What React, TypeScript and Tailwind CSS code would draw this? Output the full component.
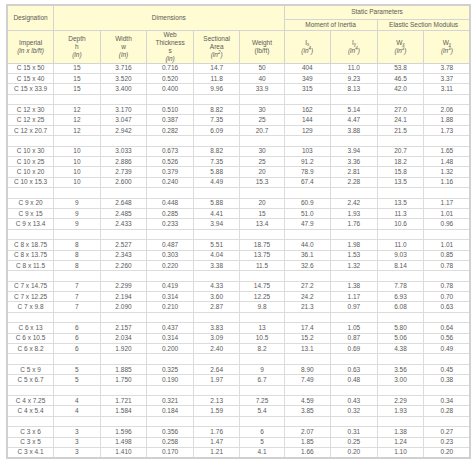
const groups: string[][][] = [
  [
    ["C 15 x 50", "15", "3.716", "0.716", "14.7", "50", "404", "11.0", "53.8", "3.78"],
    ["C 15 x 40", "15", "3.520", "0.520", "11.8", "40", "349", "9.23", "46.5", "3.37"],
    ["C 15 x 33.9", "15", "3.400", "0.400", "9.96", "33.9", "315", "8.13", "42.0", "3.11"],
  ],
  [
    ["C 12 x 30", "12", "3.170", "0.510", "8.82", "30", "162", "5.14", "27.0", "2.06"],
    ["C 12 x 25", "12", "3.047", "0.387", "7.35", "25", "144", "4.47", "24.1", "1.88"],
    ["C 12 x 20.7", "12", "2.942", "0.282", "6.09", "20.7", "129", "3.88", "21.5", "1.73"],
  ],
  [
    ["C 10 x 30", "10", "3.033", "0.673", "8.82", "30", "103", "3.94", "20.7", "1.65"],
    ["C 10 x 25", "10", "2.886", "0.526", "7.35", "25", "91.2", "3.36", "18.2", "1.48"],
    ["C 10 x 20", "10", "2.739", "0.379", "5.88", "20", "78.9", "2.81", "15.8", "1.32"],
    ["C 10 x 15.3", "10", "2.600", "0.240", "4.49", "15.3", "67.4", "2.28", "13.5", "1.16"],
  ],
  [
    ["C 9 x 20", "9", "2.648", "0.448", "5.88", "20", "60.9", "2.42", "13.5", "1.17"],
    ["C 9 x 15", "9", "2.485", "0.285", "4.41", "15", "51.0", "1.93", "11.3", "1.01"],
    ["C 9 x 13.4", "9", "2.433", "0.233", "3.94", "13.4", "47.9", "1.76", "10.6", "0.96"],
  ],
  [
    ["C 8 x 18.75", "8", "2.527", "0.487", "5.51", "18.75", "44.0", "1.98", "11.0", "1.01"],
    ["C 8 x 13.75", "8", "2.343", "0.303", "4.04", "13.75", "36.1", "1.53", "9.03", "0.85"],
    ["C 8 x 11.5", "8", "2.260", "0.220", "3.38", "11.5", "32.6", "1.32", "8.14", "0.78"],
  ],
  [
    ["C 7 x 14.75", "7", "2.299", "0.419", "4.33", "14.75", "27.2", "1.38", "7.78", "0.78"],
    ["C 7 x 12.25", "7", "2.194", "0.314", "3.60", "12.25", "24.2", "1.17", "6.93", "0.70"],
    ["C 7 x 9.8", "7", "2.090", "0.210", "2.87", "9.8", "21.3", "0.97", "6.08", "0.63"],
  ],
  [
    ["C 6 x 13", "6", "2.157", "0.437", "3.83", "13", "17.4", "1.05", "5.80", "0.64"],
    ["C 6 x 10.5", "6", "2.034", "0.314", "3.09", "10.5", "15.2", "0.87", "5.06", "0.56"],
    ["C 6 x 8.2", "6", "1.920", "0.200", "2.40", "8.2", "13.1", "0.69", "4.38", "0.49"],
  ],
  [
    ["C 5 x 9", "5", "1.885", "0.325", "2.64", "9", "8.90", "0.63", "3.56", "0.45"],
    ["C 5 x 6.7", "5", "1.750", "0.190", "1.97", "6.7", "7.49", "0.48", "3.00", "0.38"],
  ],
  [
    ["C 4 x 7.25", "4", "1.721", "0.321", "2.13", "7.25", "4.59", "0.43", "2.29", "0.34"],
    ["C 4 x 5.4", "4", "1.584", "0.184", "1.59", "5.4", "3.85", "0.32", "1.93", "0.28"],
  ],
  [
    ["C 3 x 6", "3", "1.596", "0.356", "1.76", "6", "2.07", "0.31", "1.38", "0.27"],
    ["C 3 x 5", "3", "1.498", "0.258", "1.47", "5", "1.85", "0.25", "1.24", "0.23"],
    ["C 3 x 4.1", "3", "1.410", "0.170", "1.21", "4.1", "1.66", "0.20", "1.10", "0.20"],
  ],
];

const rows: (string[] | null)[] = [];
groups.forEach((g, i) => {
  if (i > 0) rows.push(null);
  g.forEach((r) => rows.push(r));
});

const th = "border border-[#d4d4d4] bg-[#fffbd2] font-normal text-center align-middle px-0";
const td = "border border-[#dcdcdc] text-center align-middle p-0 h-[10.4px]";

const Unit = ({ children }: { children: React.ReactNode }) => <span className="block italic">{children}</span>;

export default function App() {
  return (
    <div className="bg-white w-[474px] h-[462px] pt-[4px] pl-[6px]" style={{ fontFamily: '"Liberation Sans", Arial, sans-serif' }}>
      <table className="w-[464px] table-fixed border-collapse border-2 border-[#d0d0d0] text-[6.5px] leading-[8px] text-[#5a5a5a]">
        <colgroup>
          {Array.from({ length: 10 }).map((_, i) => (
            <col key={i} className={i === 5 ? "w-[44px]" : "w-[46.6px]"} />
          ))}
        </colgroup>
        <thead>
          <tr className="h-[14px]">
            <th rowSpan={2} className={th}>Designation</th>
            <th rowSpan={2} colSpan={5} className={th}>Dimensions</th>
            <th colSpan={4} className={th}>Static Parameters</th>
          </tr>
          <tr className="h-[11px]">
            <th colSpan={2} className={th}>Moment of Inertia</th>
            <th colSpan={2} className={th}>Elastic Section Modulus</th>
          </tr>
          <tr className="h-[30px]">
            <th className={th}>
              <span className="block">Imperial</span>
              <Unit>(in x lb/ft)</Unit>
            </th>
            <th className={th}>
              <span className="block">Depth</span>
              <span className="block">h</span>
              <Unit>(in)</Unit>
            </th>
            <th className={th}>
              <span className="block">Width</span>
              <span className="block">w</span>
              <Unit>(in)</Unit>
            </th>
            <th className={th}>
              <span className="block">Web</span>
              <span className="block">Thickness</span>
              <span className="block">s</span>
              <Unit>(in)</Unit>
            </th>
            <th className={th}>
              <span className="block">Sectional</span>
              <span className="block">Area</span>
              <Unit>
                (in<sup className="text-[4.5px]">2</sup>)
              </Unit>
            </th>
            <th className={th}>
              <span className="block">Weight</span>
              <span className="block">(lb/ft)</span>
            </th>
            {[
              ["I", "x", "4"],
              ["I", "y", "4"],
              ["W", "x", "3"],
              ["W", "y", "3"],
            ].map(([a, b, p], i) => (
              <th key={i} className={th}>
                <span className="block">
                  {a}
                  <sub className="text-[4.5px]">{b}</sub>
                </span>
                <Unit>
                  (in<sup className="text-[4.5px]">{p}</sup>)
                </Unit>
              </th>
            ))}
          </tr>
        </thead>
        <tbody>
          {rows.map((r, i) => (
            <tr key={i} className="h-[10.4px]">
              {r
                ? r.map((c, j) => (
                    <td key={j} className={td}>
                      {c}
                    </td>
                  ))
                : Array.from({ length: 10 }).map((_, j) => <td key={j} className={td}></td>)}
            </tr>
          ))}
        </tbody>
      </table>
    </div>
  );
}
